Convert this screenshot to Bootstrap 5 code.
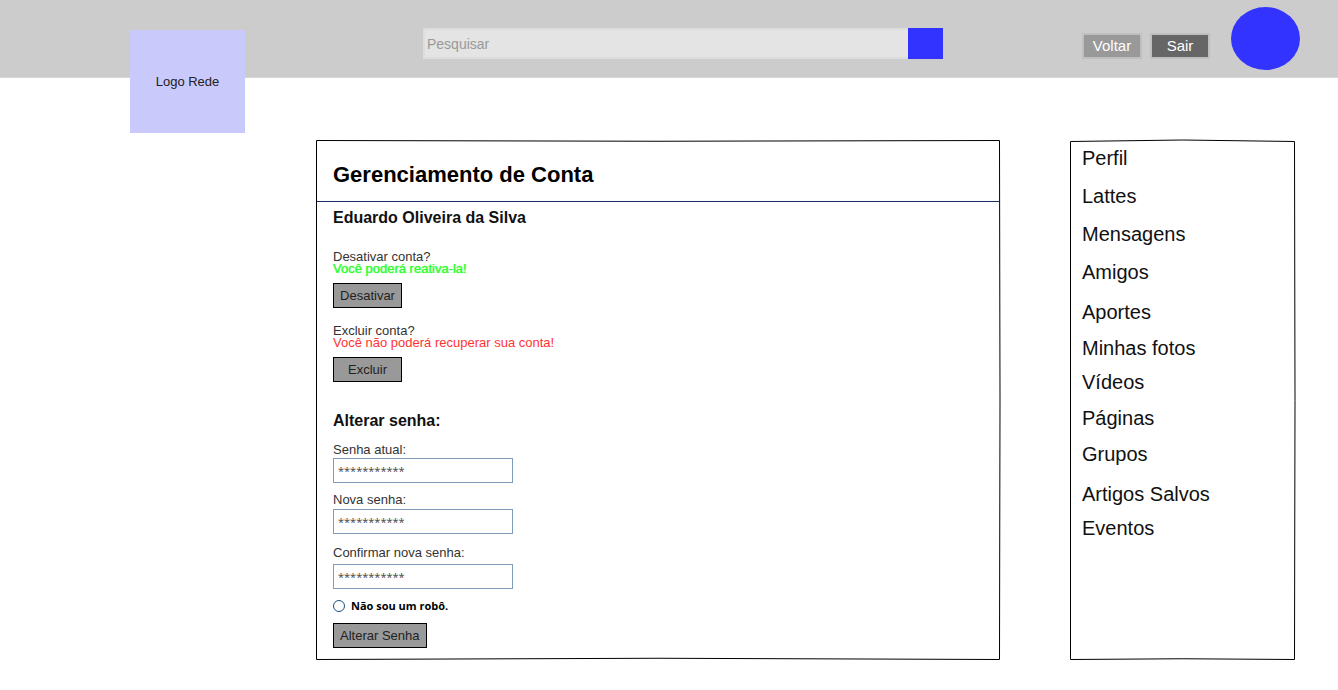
<!DOCTYPE html>
<html lang="pt-BR">
<head>
<meta charset="utf-8">
<meta name="viewport" content="width=device-width, initial-scale=1">
<title>Gerenciamento de Conta</title>
<link href="https://cdn.jsdelivr.net/npm/bootstrap@5.3.0/dist/css/bootstrap.min.css" rel="stylesheet">
<style>
  body { font-family: "Liberation Sans", Arial, sans-serif; font-size: 13px; color: #333; background: #fff; }
  .topbar { height: 78px; background: #ccc; border-bottom: 1px solid #d7d7d7; padding: 0 38px 0 130px; }
  .logo-box { width: 115px; height: 103px; margin-top: 30px; background: #c9c9fc; color: #222; }
  .search-form { height: 31px; margin: 28px 139px 0 178px; }
  .search-form .form-control { background: #e4e4e4; border: 2px solid #ddd; border-right: 0; padding: 0 2px; font-size: 14px; color: #333; }
  .search-form .form-control::placeholder { color: #999; opacity: 1; }
  .search-btn { width: 35px; background: #33f; }
  .top-btn { width: 60px; height: 26px; border: 2px solid #bfbfbf; padding: 0; font-size: 15px; line-height: 22px; color: #fff; }
  .top-actions { gap: 8px; margin-top: 33px; }
  .btn-back { background: #999; }
  .btn-exit { background: #666; }
  .avatar { width: 69px; height: 63px; margin: 7px 0 0 21px; background: #33f; }
  .page-body { padding: 62px 42px 30px 316px; gap: 70px; }
  .frame { inset: 0; pointer-events: none; }
  .frame path { fill: none; stroke: #000; stroke-width: 1; vector-effect: non-scaling-stroke; }
  .panel-head { margin: 0 1px; padding: 22px 16px 13px; border-bottom: 1px solid #1e2c66; }
  .panel-head h1 { font-size: 22px; line-height: 26px; font-weight: 700; color: #000; }
  .panel-main { padding: 6px 17px 12px; }
  .panel-main h2 { font-size: 16px; line-height: 20px; font-weight: 700; color: #111; }
  .action-block { line-height: 12px; margin-bottom: 17px; }
  .name-title { margin-bottom: 23px; }
  .note { margin-bottom: 8px; }
  .note-ok { color: #3f3; text-shadow: 0 0 1px #3f3; }
  .note-warn { color: #f33; }
  .btn-flat { height: 25px; min-width: 69px; padding: 0 6px; border: 1px solid #000; background: #999; color: #222; font-size: 13px; line-height: 23px; }
  .pass-title { margin: 29px 0 11px; }
  .field { margin-bottom: 9px; }
  .field-last { padding-top: 2px; }
  .field label { line-height: 16px; }
  .field .label-near { padding-bottom: 1px; }
  .field .label-far { padding-bottom: 3px; }
  .field .form-control { width: 180px; height: 25px; padding: 0 4px; border: 1px solid #7f9db9; font: 11px/16px "Open Sans", "Noto Sans", sans-serif; }
  .field .form-control::placeholder { color: #444; opacity: 1; }
  .robot { gap: 6px; margin-bottom: 10px; height: 15px; color: #000; font: bold 11px/15px "Open Sans", "Noto Sans", sans-serif; }
  .robot .form-check-input { width: 12px; height: 12px; margin: 0; border: 1px solid #1c5180; }
  .side-menu { width: 226px; padding: 6px 12px; font-size: 20px; line-height: 24px; }
  .side-menu a { color: #111; }
  .side-menu li { margin-bottom: 12px; }
  .side-menu .gap-s { margin-bottom: 10px; }
  .side-menu .gap-l { margin-bottom: 14px; }
  .side-menu .gap-xl { margin-bottom: 16px; }
</style>
</head>
<body>
<header class="topbar d-flex align-items-start">
  <a href="#" class="logo-box d-flex flex-shrink-0 align-items-center justify-content-center text-decoration-none">Logo Rede</a>
  <form class="search-form d-flex flex-grow-1" role="search">
    <input type="search" class="form-control rounded-0 h-100" placeholder="Pesquisar" aria-label="Pesquisar">
    <button type="button" class="search-btn btn rounded-0 border-0 p-0 flex-shrink-0" aria-label="Buscar"></button>
  </form>
  <div class="top-actions d-flex flex-shrink-0">
    <button type="button" class="top-btn btn-back btn rounded-0">Voltar</button>
    <button type="button" class="top-btn btn-exit btn rounded-0">Sair</button>
  </div>
  <a href="#" class="avatar rounded-circle flex-shrink-0" aria-label="Meu perfil"></a>
</header>

<div class="page-body d-flex align-items-stretch">
  <main class="position-relative flex-grow-1">
    <svg class="frame position-absolute w-100 h-100 overflow-visible" viewBox="0 0 684 520" preserveAspectRatio="none" aria-hidden="true">
      <path d="M.5 .5Q342 2 683.5 .5Q684.5 260 683.5 519.5Q342 517 .5 519.5Z"/>
    </svg>
    <div class="panel-head"><h1 class="m-0">Gerenciamento de Conta</h1></div>
    <div class="panel-main">
      <h2 class="name-title">Eduardo Oliveira da Silva</h2>
      <section class="action-block">
        <div>Desativar conta?</div>
        <div class="note note-ok">Você poderá reativa-la!</div>
        <button type="button" class="btn btn-flat rounded-0">Desativar</button>
      </section>
      <section class="action-block">
        <div>Excluir conta?</div>
        <div class="note note-warn">Você não poderá recuperar sua conta!</div>
        <button type="button" class="btn btn-flat rounded-0">Excluir</button>
      </section>
      <form>
        <h2 class="pass-title">Alterar senha:</h2>
        <div class="field">
          <label for="atual" class="d-block">Senha atual:</label>
          <input id="atual" type="password" class="form-control rounded-0" placeholder="***********">
        </div>
        <div class="field">
          <label for="nova" class="label-near d-block">Nova senha:</label>
          <input id="nova" type="password" class="form-control rounded-0" placeholder="***********">
        </div>
        <div class="field field-last">
          <label for="confirma" class="label-far d-block">Confirmar nova senha:</label>
          <input id="confirma" type="password" class="form-control rounded-0" placeholder="***********">
        </div>
        <div class="robot d-flex align-items-center">
          <input id="robo" type="radio" class="form-check-input">
          <label for="robo">Não sou um robô.</label>
        </div>
        <button type="button" class="btn btn-flat rounded-0">Alterar Senha</button>
      </form>
    </div>
  </main>

  <nav class="side-menu position-relative flex-shrink-0" aria-label="Menu">
    <svg class="frame position-absolute w-100 h-100 overflow-visible" viewBox="0 0 226 520" preserveAspectRatio="none" aria-hidden="true">
      <path d="M.5 1.5Q113 -1.5 224.5 1.5Q225.5 260 224.5 519.5Q113 518 .5 519.5Z"/>
    </svg>
    <ul class="list-unstyled position-relative m-0">
      <li class="gap-l"><a class="text-decoration-none" href="#">Perfil</a></li>
      <li class="gap-l"><a class="text-decoration-none" href="#">Lattes</a></li>
      <li class="gap-l"><a class="text-decoration-none" href="#">Mensagens</a></li>
      <li class="gap-xl"><a class="text-decoration-none" href="#">Amigos</a></li>
      <li><a class="text-decoration-none" href="#">Aportes</a></li>
      <li class="gap-s"><a class="text-decoration-none" href="#">Minhas fotos</a></li>
      <li><a class="text-decoration-none" href="#">Vídeos</a></li>
      <li><a class="text-decoration-none" href="#">Páginas</a></li>
      <li class="gap-xl"><a class="text-decoration-none" href="#">Grupos</a></li>
      <li class="gap-s"><a class="text-decoration-none" href="#">Artigos Salvos</a></li>
      <li class="mb-0"><a class="text-decoration-none" href="#">Eventos</a></li>
    </ul>
  </nav>
</div>
<script src="https://cdn.jsdelivr.net/npm/bootstrap@5.3.0/dist/js/bootstrap.bundle.min.js"></script>
</body>
</html>
